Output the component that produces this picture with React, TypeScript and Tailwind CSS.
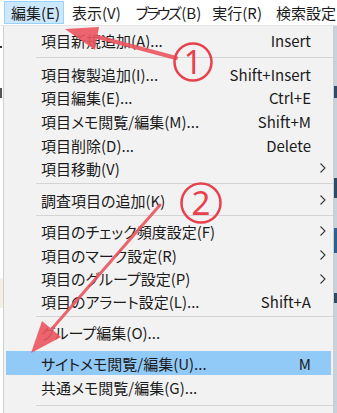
import React from "react";

type Row =
  | { kind: "sep"; h: string; }
  | { kind: "item"; t: string; s?: string; sub?: boolean; hl?: boolean; h: string };

const rows: Row[] = [
  { kind: "item", t: "項目新規追加(A)...", s: "Insert", h: "h-[24px]" },
  { kind: "sep", h: "h-[10px]" },
  { kind: "item", t: "項目複製追加(I)...", s: "Shift+Insert", h: "h-[24px]" },
  { kind: "item", t: "項目編集(E)...", s: "Ctrl+E", h: "h-[23px]" },
  { kind: "item", t: "項目メモ閲覧/編集(M)...", s: "Shift+M", h: "h-[24px]" },
  { kind: "item", t: "項目削除(D)...", s: "Delete", h: "h-[24px]" },
  { kind: "item", t: "項目移動(V)", sub: true, h: "h-[22px]" },
  { kind: "sep", h: "h-[9px]" },
  { kind: "item", t: "調査項目の追加(K)", sub: true, h: "h-[24px]" },
  { kind: "sep", h: "h-[7px]" },
  { kind: "item", t: "項目のチェック頻度設定(F)", sub: true, h: "h-[24px]" },
  { kind: "item", t: "項目のマーク設定(R)", sub: true, h: "h-[24px]" },
  { kind: "item", t: "項目のグループ設定(P)", sub: true, h: "h-[23px]" },
  { kind: "item", t: "項目のアラート設定(L)...", s: "Shift+A", h: "h-[22px]" },
  { kind: "sep", h: "h-[8px]" },
  { kind: "item", t: "グループ編集(O)...", h: "h-[31px] pb-[7px]" },
  { kind: "item", t: "サイトメモ閲覧/編集(U)...", s: "M", hl: true, h: "h-[24px]" },
  { kind: "item", t: "共通メモ閲覧/編集(G)...", h: "h-[24px]" },
  { kind: "sep", h: "h-[13px]" },
];

function Chevron() {
  return (
    <svg width="6" height="10" viewBox="0 0 6 10" className="block">
      <polyline points="0.5,0.5 5,5 0.5,9.5" fill="none" stroke="#3a3a3a" strokeWidth="1.1" />
    </svg>
  );
}

export default function App() {
  return (
    <div className="relative w-[337px] h-[413px] overflow-hidden bg-white font-['Noto_Sans_CJK_JP',sans-serif] [font-feature-settings:'palt'] text-[15px] text-[#1b1b1b]">
      {/* menu bar */}
      <div className="flex h-[26px] items-stretch bg-white border-b border-[#e6e6e6] whitespace-nowrap">
        <div className="shrink-0 ml-[4px] mt-[1px] mb-[1px] flex items-center w-[60px] pl-[6px] bg-[#cce8ff] border border-[#99d1ff] leading-none">
          編集(E)
        </div>
        <div className="shrink-0 flex items-center pl-[8px] pr-[14px] leading-none">表示(V)</div>
        <div className="shrink-0 flex items-center pl-[1px] pr-[10px] leading-none">
          <span className="tracking-[-2.5px] mr-[2px]">ブラウズ</span>(B)
        </div>
        <div className="shrink-0 flex items-center pl-[1px] pr-[13px] leading-none">実行(R)</div>
        <div className="shrink-0 flex items-center pl-[1px] leading-none">
          検索設定<span className="ml-[3px] inline-block w-[4px] h-[10px] bg-[#d9343c] rounded-sm" />
        </div>
      </div>

      {/* body */}
      <div className="flex h-[387px]">
        <div className="w-[3px] bg-white flex flex-col">
          <div className="h-[20px]" />
          <div className="h-[2px] w-[2px] bg-[#333]" />
          <div className="h-[40px]" />
          <div className="h-[10px] w-[2px] bg-[#555]" />
          <div className="h-[180px]" />
          <div className="h-[30px] bg-[#f3efe4]" />
        </div>
        <div className="w-[331px] bg-[#f2f2f2] border-l border-r border-[#cfcfcf] pt-[2px] flex flex-col">
          {rows.map((r, i) =>
            r.kind === "sep" ? (
              <div key={i} className={`${r.h} flex items-center pl-[32px]`}>
                <div className="h-px w-full bg-[#d4d4d4]" />
              </div>
            ) : (
              <div
                key={i}
                className={`${r.h} mx-[2px] flex items-center pl-[35px] whitespace-nowrap ${r.hl ? "bg-[#91c9f7]" : ""}`}
              >
                <span className="flex-1 leading-none">{r.t}</span>
                {r.s && <span className="leading-none">{r.s}</span>}
                <span className="w-[20px] flex justify-center pl-[4px]">{r.sub && <Chevron />}</span>
              </div>
            )
          )}
        </div>
        <div className="w-[3px] bg-[#c9d2db] flex flex-col">
          <div className="h-[60px]" />
          <div className="h-[12px] bg-[#2f4a66]" />
          <div className="h-[80px]" />
          <div className="h-[20px] bg-[#2f4a66]" />
          <div className="h-[30px]" />
          <div className="h-[25px] bg-[#2f5f8f]" />
          <div className="h-[40px]" />
          <div className="h-[10px] bg-[#2f4a66]" />
        </div>
      </div>

      {/* annotations */}
      <svg className="absolute left-0 top-0 pointer-events-none" width="337" height="413" viewBox="0 0 337 413">
        <g fill="#ec5560" stroke="#ec5560" opacity="0.9">
          <line x1="176" y1="58" x2="94" y2="36" strokeWidth="4" strokeLinecap="round" />
          <polygon points="65,29 99,27 95,50" stroke="none" />
          <line x1="160" y1="205" x2="50" y2="331" strokeWidth="3" strokeLinecap="round" />
          <polygon points="31,353 42,321 61,337" stroke="none" />
        </g>
        <g fill="none" stroke="#e8414d" strokeWidth="2.5">
          <circle cx="193" cy="62" r="18.5" />
          <circle cx="201" cy="203" r="19.5" />
        </g>
        <text x="193" y="74" textAnchor="middle" fontSize="32" fill="#e8414d" fontFamily="'Noto Sans', sans-serif">1</text>
        <text x="201" y="215" textAnchor="middle" fontSize="33" fill="#e8414d" fontFamily="'Noto Sans', sans-serif">2</text>
      </svg>
    </div>
  );
}
